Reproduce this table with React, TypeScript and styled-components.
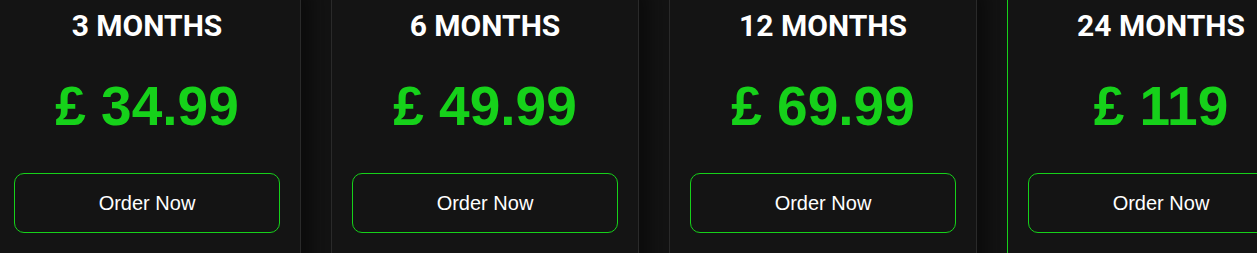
import styled, {createGlobalStyle} from 'styled-components';

const GlobalStyle = createGlobalStyle`
    html, body {
        margin: 0;
        padding: 0;
        background: #141414;
        overflow: hidden;
    }
`;

const plans = [
    {title: "3 MONTHS", price: "£ 34.99", active: false},
    {title: "6 MONTHS", price: "£ 49.99", active: false},
    {title: "12 MONTHS", price: "£ 69.99", active: false},
    {title: "24 MONTHS", price: "£ 119", active: true},
];

// carousel is scrolled a little, so the first card and the tops are cut off
const Track = styled.div`
    display: flex;
    gap: 30px;
    margin: -12px 0 0 -7px;
    width: max-content;
    height: 265px;
    background: #141414;
`;

const Card = styled.div<{$active: boolean}>`
    box-sizing: border-box;
    width: 308px;
    height: 300px;
    flex: none;
    display: flex;
    flex-direction: column;
    align-items: center;
    padding: 19px 20px 0;
    background: #141414;
    border: 1px solid ${p => p.$active ? '#16d11a' : '#2a2a2a'};
    box-shadow: 12px 0 18px rgba(0, 0, 0, 0.45);
`;

const Title = styled.h3`
    margin: 0;
    font-family: Roboto, "Liberation Sans", sans-serif;
    font-weight: 700;
    font-size: 30px;
    line-height: 36px;
    color: #ffffff;
`;

const Price = styled.div`
    margin-top: 31px;
    font-family: "Liberation Sans", Arial, sans-serif;
    font-weight: 700;
    font-size: 55px;
    line-height: 62px;
    color: #16d11a;
`;

const OrderButton = styled.button`
    box-sizing: border-box;
    margin-top: 36px;
    width: 100%;
    height: 60px;
    background: transparent;
    border: 1px solid #16d11a;
    border-radius: 10px;
    font-family: "Liberation Sans", Arial, sans-serif;
    font-size: 20px;
    color: #ffffff;
    cursor: pointer;
`;

const App = () => {
    return (
        <>
            <GlobalStyle/>
            <Track>
                {plans.map((plan) => (
                    <Card key={plan.title} $active={plan.active}>
                        <Title>{plan.title}</Title>
                        <Price>{plan.price}</Price>
                        <OrderButton>Order Now</OrderButton>
                    </Card>
                ))}
            </Track>
        </>
    );
};

export default App;
